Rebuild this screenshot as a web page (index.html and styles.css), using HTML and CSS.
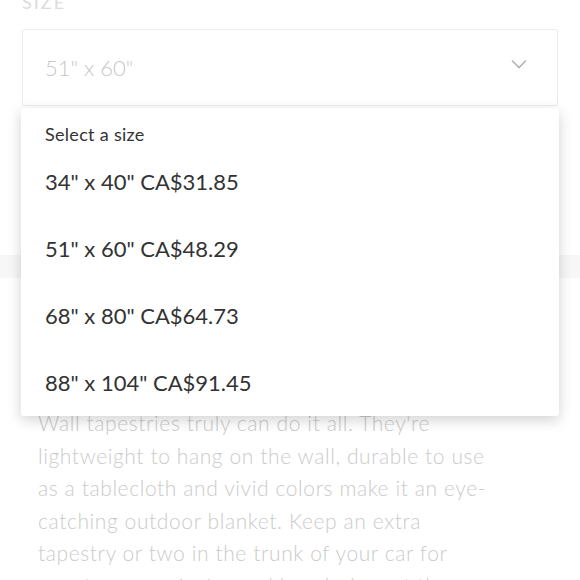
FILE: index.html
```html
<!DOCTYPE html>
<html lang="en">
<head>
    <meta charset="UTF-8">
    <meta name="viewport" content="width=device-width, initial-scale=1.0">
    <title>Wall Tapestry - Size</title>
    <link rel="stylesheet" href="styles.css">
</head>
<body>
    <div class="product">
        <div class="field-label">Size</div>
        <div class="select">
            <span class="select-value">51" x 60"</span>
            <svg class="chevron" width="16" height="10" viewBox="0 0 16 10">
                <path d="M1 1.5 L8 8.5 L15 1.5" fill="none" stroke="#b4b4b4" stroke-width="1.6"/>
            </svg>
        </div>

        <div class="divider"></div>

        <p class="description">
            Wall tapestries truly can do it all. They're lightweight to hang on the wall, durable to use as a tablecloth and vivid colors make it an eye-catching outdoor blanket. Keep an extra tapestry or two in the trunk of your car for spontaneous picnics and beach days at the drop of a hat.
        </p>
    </div>

    <div class="dropdown">
        <div class="dropdown-title">Select a size</div>
        <div class="option">34" x 40" CA$31.85</div>
        <div class="option">51" x 60" CA$48.29</div>
        <div class="option">68" x 80" CA$64.73</div>
        <div class="option">88" x 104" CA$91.45</div>
    </div>
</body>
</html>
```

FILE: styles.css
```css
body {
    font-family: 'Lato', 'Noto Sans', sans-serif;
    background-color: #fff;
    color: #333;
    margin: 0;
    height: 580px;
    overflow: hidden;
    position: relative;
}
.product {
    margin-top: -8px;
}
.field-label {
    font-size: 18px;
    line-height: 20px;
    letter-spacing: 2px;
    text-transform: uppercase;
    color: #dcdcdc;
    padding-left: 22px;
}
.select {
    margin: 17px 22px 0;
    height: 77px;
    border: 1px solid #ececec;
    border-radius: 2px;
    box-sizing: border-box;
    padding: 0 30px 0 22px;
    display: flex;
    justify-content: space-between;
    align-items: center;
}
.select-value {
    font-size: 22px;
    color: #c6c6c6;
    font-weight: 300;
}
.chevron {
    margin-bottom: 7px;
}
.divider {
    margin-top: 149px;
    height: 23px;
    background-color: #f7f7f7;
}
.description {
    margin: 129px 0 0;
    width: 460px;
    padding: 0 38px;
    font-size: 21px;
    line-height: 32.5px;
    letter-spacing: 0.6px;
    color: #cbcbcb;
    font-weight: 300;
}
.dropdown {
    position: absolute;
    top: 108px;
    left: 21px;
    width: 538px;
    background-color: #fff;
    border-radius: 3px;
    box-shadow: 0 4px 14px rgba(0, 0, 0, 0.18);
    padding-top: 14px;
}
.dropdown-title {
    font-size: 18px;
    line-height: 24px;
    letter-spacing: 0.3px;
    padding-left: 24px;
    margin-bottom: 2px;
    color: #333;
}
.option {
    font-size: 22px;
    line-height: 67px;
    padding-left: 24px;
    color: #333;
}
```
